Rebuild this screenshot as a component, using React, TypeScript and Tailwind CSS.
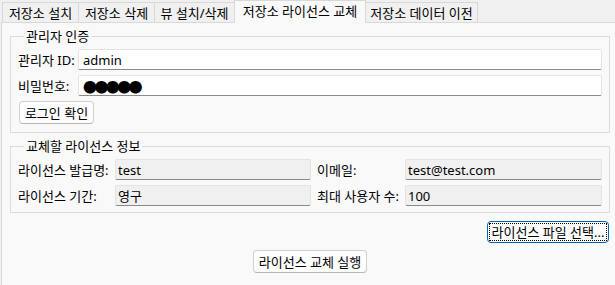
import React from 'react';

const tabs = [
  { label: '저장소 설치', w: 'w-[77px]' },
  { label: '저장소 삭제', w: 'w-[77px]' },
  { label: '뷰 설치/삭제', w: 'w-[81px]' },
  { label: '저장소 라이선스 교체', w: 'w-[132px]', active: true },
  { label: '저장소 데이터 이전', w: 'w-[113px]' },
];

function Tab({ label, w, active }: { label: string; w: string; active?: boolean }) {
  return (
    <div
      className={`${w} -ml-px first:ml-0 flex items-center justify-center border-t border-l border-r border-[#d9d9d9] whitespace-nowrap ${
        active ? 'relative z-10 h-[23px] -mb-px bg-[#f9f9f9] pb-[2px]' : 'h-[20px] bg-[#f0f0f0]'
      }`}
    >
      {label}
    </div>
  );
}

function GroupBox({ title, className = '', children }: { title: string; className?: string; children: React.ReactNode }) {
  return (
    <fieldset className={`w-[600px] border border-[#dcdcdc] px-[7px] ${className}`}>
      <legend className="ml-[6px] px-[2px] leading-[15px]">{title}</legend>
      {children}
    </fieldset>
  );
}

function TextBox({ value, readOnly, className = '', children }: { value?: string; readOnly?: boolean; className?: string; children?: React.ReactNode }) {
  return (
    <div
      className={`h-[21px] flex items-center rounded-[2px] border border-[#e3e3e3] border-b-[#8a8a8a] ${
        readOnly ? 'bg-[#f0f0f0] pl-[2px]' : 'bg-white pl-[4px]'
      } ${className}`}
    >
      {value}
      {children}
    </div>
  );
}

function Button({ children, focused, className = '' }: { children: React.ReactNode; focused?: boolean; className?: string }) {
  return (
    <div
      className={`flex items-center justify-center rounded-[4px] border bg-[#fdfdfd] whitespace-nowrap ${
        focused ? 'border-[#0067c0] p-px' : 'border-[#d0d0d0] border-b-[#b5b5b5]'
      } ${className}`}
    >
      {focused ? (
        <span className="w-full h-full flex items-center justify-center border border-dotted border-black">{children}</span>
      ) : (
        children
      )}
    </div>
  );
}

export default function App() {
  return (
    <div className="w-[615px] h-[285px] overflow-hidden flex flex-col bg-[#f0f0f0] text-[13px] leading-[16px] text-black font-['Noto_Sans','Noto_Sans_CJK_KR',sans-serif]">
      {/* Tab strip */}
      <div className="h-[22px] flex items-end pl-[2px] shrink-0">
        {tabs.map((t) => (
          <Tab key={t.label} {...t} />
        ))}
      </div>

      {/* Tab page */}
      <div className="flex-1 ml-px border-l border-t border-[#d9d9d9] bg-[#f9f9f9] pl-[8px] pt-[6px]">
        <GroupBox title="관리자 인증" className="pt-[5px] pb-[8px]">
          <div className="flex flex-col gap-[5px]">
            <div className="flex items-center">
              <span className="w-[60px] whitespace-nowrap">관리자 ID:</span>
              <TextBox value="admin" className="flex-1" />
            </div>
            <div className="flex items-center">
              <span className="w-[60px] whitespace-nowrap">비밀번호:</span>
              <TextBox className="flex-1">
                <span className="font-['Noto_Sans_CJK_KR',sans-serif] text-[14px] tracking-[-2.6px]">●●●●●</span>
              </TextBox>
            </div>
            <Button className="ml-px w-[75px] h-[23px]">로그인 확인</Button>
          </div>
        </GroupBox>

        <GroupBox title="교체할 라이선스 정보" className="mt-[6px] pt-[5px] pb-[6px]">
          <div className="grid grid-cols-[97px_196px_6px_88px_1fr] gap-y-[5px] items-center whitespace-nowrap">
            <span>라이선스 발급명:</span>
            <TextBox value="test" readOnly />
            <span />
            <span>이메일:</span>
            <TextBox value="test@test.com" readOnly />
            <span>라이선스 기간:</span>
            <TextBox value="영구" readOnly />
            <span />
            <span>최대 사용자 수:</span>
            <TextBox value="100" readOnly />
          </div>
        </GroupBox>

        <div className="w-[600px] flex justify-end pr-px mt-[8px]">
          <Button focused className="w-[122px] h-[22px]">라이선스 파일 선택...</Button>
        </div>
        <div className="w-[600px] flex justify-center mt-[7px]">
          <Button className="w-[114px] h-[23px]">라이선스 교체 실행</Button>
        </div>
      </div>
    </div>
  );
}
